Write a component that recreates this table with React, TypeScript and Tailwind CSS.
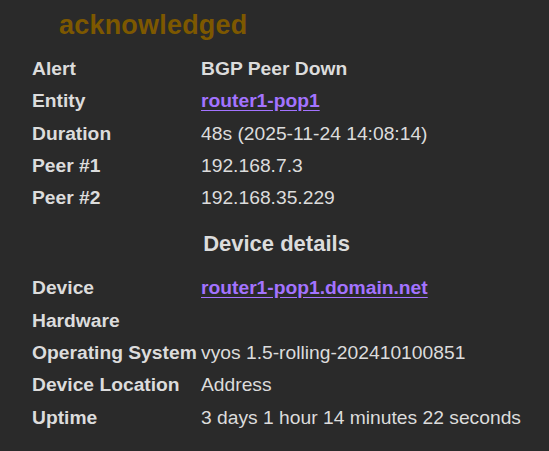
import React from "react";

const ROWS_ALERT: [string, React.ReactNode][] = [
  ["Alert", <span className="font-bold">BGP Peer Down</span>],
  ["Entity", <Lnk>router1-pop1</Lnk>],
  ["Duration", "48s (2025-11-24 14:08:14)"],
  ["Peer #1", "192.168.7.3"],
  ["Peer #2", "192.168.35.229"],
];

const ROWS_DEVICE: [string, React.ReactNode][] = [
  ["Device", <Lnk>router1-pop1.domain.net</Lnk>],
  ["Hardware", ""],
  ["Operating System", "vyos 1.5-rolling-202410100851"],
  ["Device Location", "Address"],
  ["Uptime", "3 days 1 hour 14 minutes 22 seconds"],
];

function Lnk({ children }: { children: React.ReactNode }) {
  return (
    <a href="#" className="font-bold text-[#a373ff] underline underline-offset-[3px]">
      {children}
    </a>
  );
}

function Row({ label, value }: { label: string; value: React.ReactNode }) {
  return (
    <div className="flex h-[32.4px] items-center">
      <div className="w-[169px] shrink-0 font-bold whitespace-nowrap">{label}</div>
      <div className="whitespace-nowrap">{value}</div>
    </div>
  );
}

export default function App() {
  return (
    <div
      className="w-[549px] h-[451px] bg-[#2a2a2a] text-[#dcdcdc] overflow-hidden"
      style={{ fontFamily: '"Liberation Sans", Arial, sans-serif' }}
    >
      <div className="pt-[5px] pl-[59px] h-[53px] text-[27px] font-bold text-[#7d5800] tracking-[0.2px]">
        acknowledged
      </div>
      <div className="ml-[32px] w-[489px] text-[19.25px]">
        {ROWS_ALERT.map(([l, v]) => (
          <Row key={l} label={l} value={v} />
        ))}
        <div className="h-[57.6px] flex items-center justify-center text-[22px] font-bold">
          Device details
        </div>
        {ROWS_DEVICE.map(([l, v]) => (
          <Row key={l} label={l} value={v} />
        ))}
      </div>
    </div>
  );
}
